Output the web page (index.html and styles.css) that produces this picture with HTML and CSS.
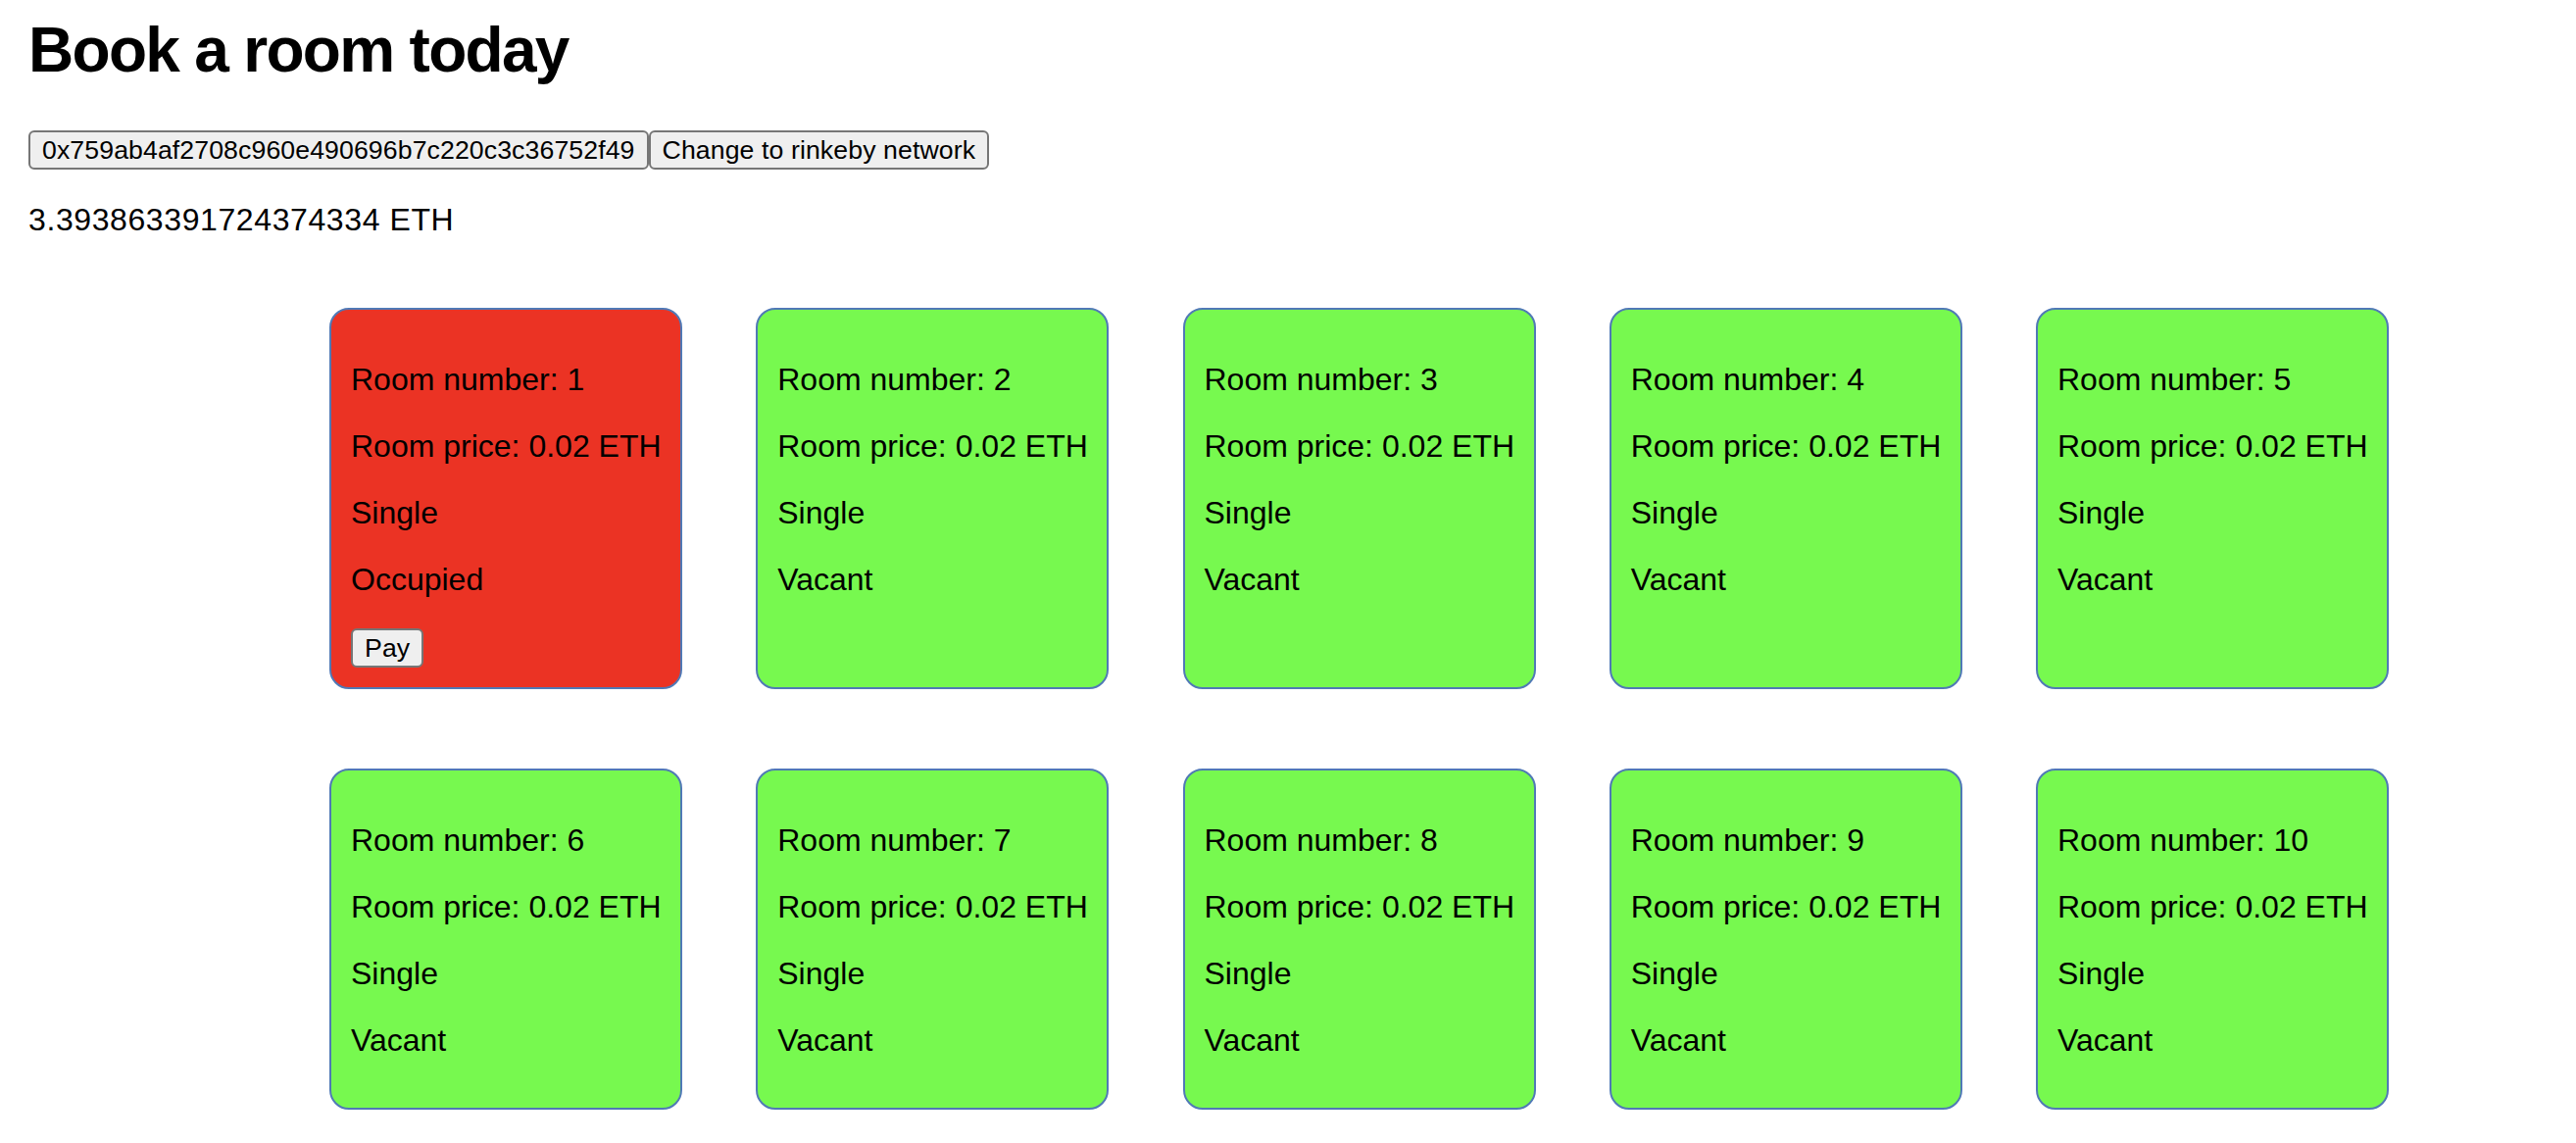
FILE: index.html
```html
<!DOCTYPE html>
<html lang="en">
<head>
<meta charset="utf-8">
<title>Book a room today</title>
<link rel="stylesheet" href="styles.css">
</head>
<body>
<div class="app">
  <h1 class="title">Book a room today</h1>
  <div class="actions"><button class="btn">0x759ab4af2708c960e490696b7c220c3c36752f49</button><button class="btn">Change to rinkeby network</button></div>
  <p class="balance">3.393863391724374334 ETH</p>
  <div class="rooms">
    <div class="room occupied">
      <p>Room number: 1</p>
      <p>Room price: 0.02 ETH</p>
      <p>Single</p>
      <p>Occupied</p>
      <button class="btn">Pay</button>
    </div>
    <div class="room vacant">
      <p>Room number: 2</p>
      <p>Room price: 0.02 ETH</p>
      <p>Single</p>
      <p>Vacant</p>
    </div>
    <div class="room vacant">
      <p>Room number: 3</p>
      <p>Room price: 0.02 ETH</p>
      <p>Single</p>
      <p>Vacant</p>
    </div>
    <div class="room vacant">
      <p>Room number: 4</p>
      <p>Room price: 0.02 ETH</p>
      <p>Single</p>
      <p>Vacant</p>
    </div>
    <div class="room vacant">
      <p>Room number: 5</p>
      <p>Room price: 0.02 ETH</p>
      <p>Single</p>
      <p>Vacant</p>
    </div>
    <div class="room vacant">
      <p>Room number: 6</p>
      <p>Room price: 0.02 ETH</p>
      <p>Single</p>
      <p>Vacant</p>
    </div>
    <div class="room vacant">
      <p>Room number: 7</p>
      <p>Room price: 0.02 ETH</p>
      <p>Single</p>
      <p>Vacant</p>
    </div>
    <div class="room vacant">
      <p>Room number: 8</p>
      <p>Room price: 0.02 ETH</p>
      <p>Single</p>
      <p>Vacant</p>
    </div>
    <div class="room vacant">
      <p>Room number: 9</p>
      <p>Room price: 0.02 ETH</p>
      <p>Single</p>
      <p>Vacant</p>
    </div>
    <div class="room vacant">
      <p>Room number: 10</p>
      <p>Room price: 0.02 ETH</p>
      <p>Single</p>
      <p>Vacant</p>
    </div>
  </div>
</div>
</body>
</html>
```

FILE: styles.css
```css
html, body {
  margin: 0;
  padding: 0;
  background: #ffffff;
}

body {
  font-family: "Liberation Sans", Arial, Helvetica, sans-serif;
  font-size: 32px;
  color: #000000;
}

.app {
  padding: 15px 0 0 29px;
}

.title {
  margin: 0;
  font-size: 64px;
  font-weight: 700;
  line-height: 73.6px;
  letter-spacing: -1.7px;
}

.actions {
  display: flex;
  margin-top: 44.4px;
}

.btn {
  font-family: "Liberation Sans", Arial, Helvetica, sans-serif;
  font-size: 26.67px;
  line-height: 32px;
  letter-spacing: 0.1px;
  padding: 2px 12px;
  border: 2px solid #767676;
  border-radius: 6px;
  background: #efefef;
  color: #000000;
  margin: 0;
}

.balance {
  margin: 33.5px 0 0 0;
  line-height: 36.8px;
  letter-spacing: 0.6px;
}

.rooms {
  display: grid;
  grid-template-columns: repeat(5, 360px);
  column-gap: 75.25px;
  row-gap: 81px;
  margin: 70.7px 0 0 307px;
}

.room {
  box-sizing: border-box;
  border: 2px solid #5079b6;
  border-radius: 20px;
  padding: 20px 20px 19px;
  white-space: nowrap;
}

.room p {
  margin: 32px 0;
  line-height: 36px;
}

.room p:first-child {
  margin-top: 33px;
}

.occupied {
  background: #eb3324;
}

.occupied .btn {
  margin-bottom: 1px;
}

.vacant {
  background: #77f94f;
}
```
